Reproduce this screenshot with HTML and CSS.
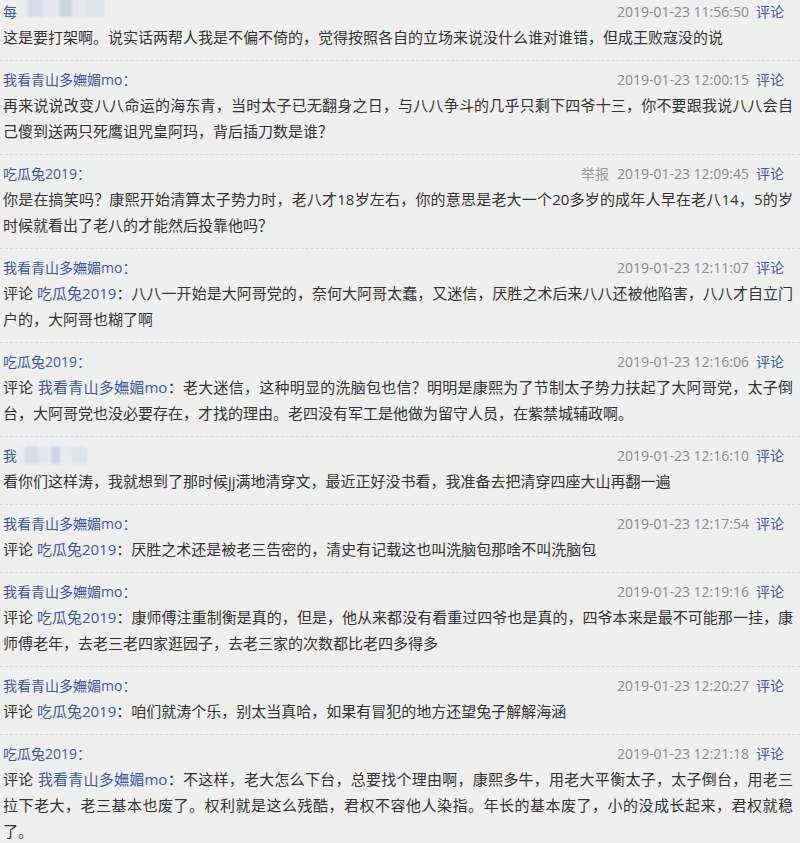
FILE: index.html
```html
<!DOCTYPE html>
<html lang="zh-CN">
<head>
    <meta charset="UTF-8">
    <meta name="viewport" content="width=device-width, initial-scale=1.0">
    <title>评论</title>
    <link rel="stylesheet" href="styles.css">
</head>
<body>
    <ul class="comment-list">
        <li class="comment">
            <div class="comment-head">
                <span class="user">每<span class="mosaic"></span></span>
                <span class="meta"><span class="time">2019-01-23 11:56:50</span><a class="reply">评论</a></span>
            </div>
            <p class="comment-text">这是要打架啊。说实话两帮人我是不偏不倚的，觉得按照各自的立场来说没什么谁对谁错，但成王败寇没的说</p>
        </li>
        <li class="comment">
            <div class="comment-head">
                <span class="user">我看青山多嫵媚mo：</span>
                <span class="meta"><span class="time">2019-01-23 12:00:15</span><a class="reply">评论</a></span>
            </div>
            <p class="comment-text">再来说说改变八八命运的海东青，当时太子已无翻身之日，与八八争斗的几乎只剩下四爷十三，你不要跟我说八八会自己傻到送两只死鹰诅咒皇阿玛，背后插刀数是谁？</p>
        </li>
        <li class="comment">
            <div class="comment-head">
                <span class="user">吃瓜兔2019：</span>
                <span class="meta"><span class="report">举报</span><span class="time">2019-01-23 12:09:45</span><a class="reply">评论</a></span>
            </div>
            <p class="comment-text">你是在搞笑吗？康熙开始清算太子势力时，老八才18岁左右，你的意思是老大一个20多岁的成年人早在老八14，5的岁时候就看出了老八的才能然后投靠他吗？</p>
        </li>
        <li class="comment">
            <div class="comment-head">
                <span class="user">我看青山多嫵媚mo：</span>
                <span class="meta"><span class="time">2019-01-23 12:11:07</span><a class="reply">评论</a></span>
            </div>
            <p class="comment-text">评论 <span class="at">吃瓜兔2019</span>：八八一开始是大阿哥党的，奈何大阿哥太蠢，又迷信，厌胜之术后来八八还被他陷害，八八才自立门户的，大阿哥也糊了啊</p>
        </li>
        <li class="comment">
            <div class="comment-head">
                <span class="user">吃瓜兔2019：</span>
                <span class="meta"><span class="time">2019-01-23 12:16:06</span><a class="reply">评论</a></span>
            </div>
            <p class="comment-text">评论 <span class="at">我看青山多嫵媚mo</span>：老大迷信，这种明显的洗脑包也信？明明是康熙为了节制太子势力扶起了大阿哥党，太子倒台，大阿哥党也没必要存在，才找的理由。老四没有军工是他做为留守人员，在紫禁城辅政啊。</p>
        </li>
        <li class="comment">
            <div class="comment-head">
                <span class="user">我<span class="mosaic short"></span></span>
                <span class="meta"><span class="time">2019-01-23 12:16:10</span><a class="reply">评论</a></span>
            </div>
            <p class="comment-text">看你们这样涛，我就想到了那时候jj满地清穿文，最近正好没书看，我准备去把清穿四座大山再翻一遍</p>
        </li>
        <li class="comment">
            <div class="comment-head">
                <span class="user">我看青山多嫵媚mo：</span>
                <span class="meta"><span class="time">2019-01-23 12:17:54</span><a class="reply">评论</a></span>
            </div>
            <p class="comment-text">评论 <span class="at">吃瓜兔2019</span>：厌胜之术还是被老三告密的，清史有记载这也叫洗脑包那啥不叫洗脑包</p>
        </li>
        <li class="comment">
            <div class="comment-head">
                <span class="user">我看青山多嫵媚mo：</span>
                <span class="meta"><span class="time">2019-01-23 12:19:16</span><a class="reply">评论</a></span>
            </div>
            <p class="comment-text">评论 <span class="at">吃瓜兔2019</span>：康师傅注重制衡是真的，但是，他从来都没有看重过四爷也是真的，四爷本来是最不可能那一挂，康师傅老年，去老三老四家逛园子，去老三家的次数都比老四多得多</p>
        </li>
        <li class="comment">
            <div class="comment-head">
                <span class="user">我看青山多嫵媚mo：</span>
                <span class="meta"><span class="time">2019-01-23 12:20:27</span><a class="reply">评论</a></span>
            </div>
            <p class="comment-text">评论 <span class="at">吃瓜兔2019</span>：咱们就涛个乐，别太当真哈，如果有冒犯的地方还望兔子解解海涵</p>
        </li>
        <li class="comment">
            <div class="comment-head">
                <span class="user">吃瓜兔2019：</span>
                <span class="meta"><span class="time">2019-01-23 12:21:18</span><a class="reply">评论</a></span>
            </div>
            <p class="comment-text">评论 <span class="at">我看青山多嫵媚mo</span>：不这样，老大怎么下台，总要找个理由啊，康熙多牛，用老大平衡太子，太子倒台，用老三拉下老大，老三基本也废了。权利就是这么残酷，君权不容他人染指。年长的基本废了，小的没成长起来，君权就稳了。</p>
        </li>
    </ul>
</body>
</html>
```

FILE: styles.css
```css
body {
    margin: 0;
    background-color: #efefef;
    font-family: "Open Sans", "Noto Sans CJK SC", sans-serif;
    color: #333;
    overflow: hidden;
}

.comment-list {
    list-style: none;
    margin: 0;
    padding: 0;
}

.comment {
    padding: 5px 7px 10px 3px;
    border-bottom: 1px dashed #dadada;
}

.comment:first-child {
    padding-top: 0;
    margin-top: -2px;
}

.comment-head {
    display: flex;
    justify-content: space-between;
    align-items: center;
    height: 26px;
    padding-right: 9px;
    font-size: 14px;
}

.user {
    display: flex;
    align-items: center;
    color: #3d5a99;
}

.mosaic {
    display: inline-block;
    width: 88px;
    height: 18px;
    margin-top: -6px;
    background: linear-gradient(90deg, #e8ebf0 0 12%, #d6dce7 12% 30%, #e4e8ee 30% 48%, #cfd6e3 48% 62%, #e6e9ee 62% 78%, #dfe3ea 78% 100%);
    filter: blur(1px);
}

.mosaic.short {
    width: 70px;
    margin-top: 0;
}

.meta {
    display: flex;
    align-items: center;
}

.report {
    color: #9a9a9a;
    margin-right: 8px;
}

.time {
    color: #8a8a8a;
}

.reply {
    color: #3d5a99;
    margin-left: 7px;
    cursor: pointer;
}

.comment-text {
    margin: 0;
    font-size: 15px;
    line-height: 26px;
    text-align: justify;
}

.comment-text .at {
    color: #3d5a99;
}
```
